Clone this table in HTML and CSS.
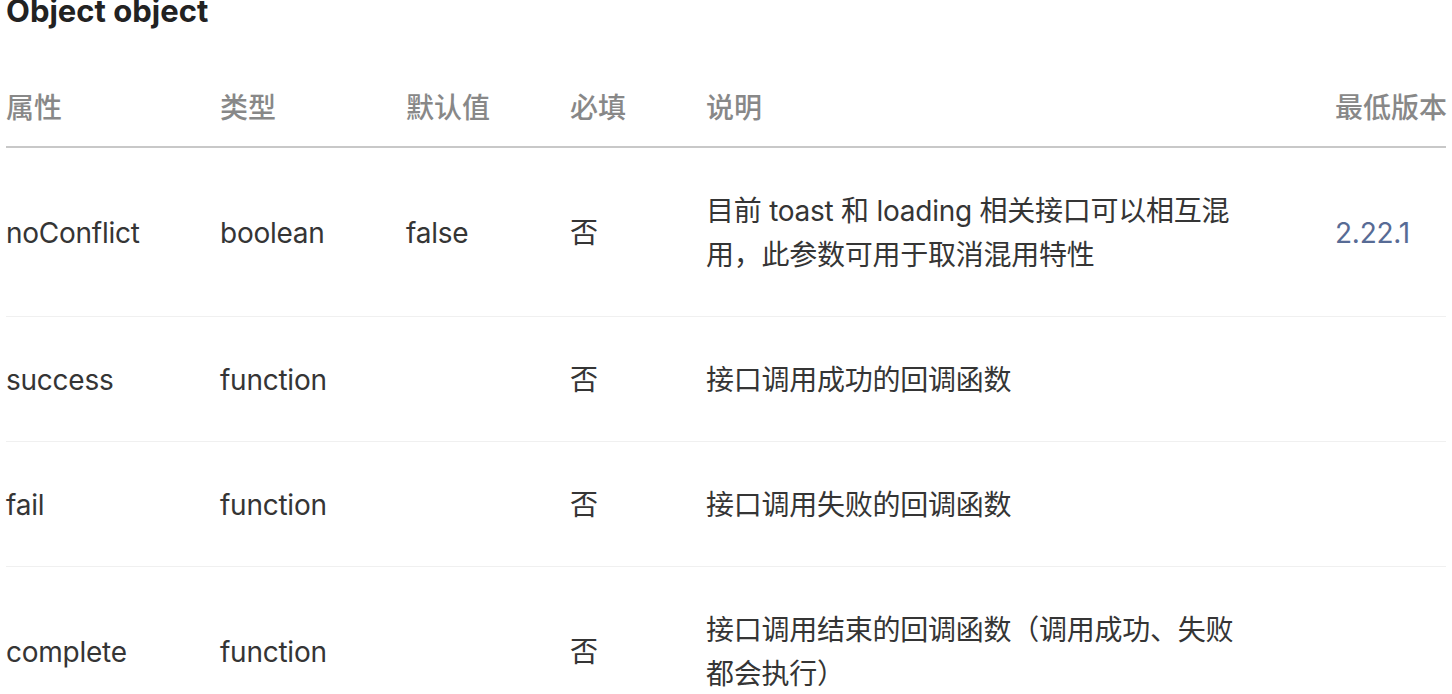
FILE: index.html
```html
<!DOCTYPE html>
<html lang="zh-CN">
<head>
<meta charset="utf-8">
<title>Object object</title>
<link rel="stylesheet" href="styles.css">
</head>
<body>
<div class="doc">
  <h3 class="title">Object object</h3>
  <table class="params">
    <colgroup>
      <col class="c-name"><col class="c-type"><col class="c-default"><col class="c-required"><col class="c-desc"><col class="c-version">
    </colgroup>
    <thead>
      <tr><th>属性</th><th>类型</th><th>默认值</th><th>必填</th><th>说明</th><th>最低版本</th></tr>
    </thead>
    <tbody>
      <tr>
        <td>noConflict</td><td>boolean</td><td>false</td><td>否</td>
        <td class="desc">目前 toast 和 loading 相关接口可以相互混用，此参数可用于取消混用特性</td>
        <td><a class="ver" href="#">2.22.1</a></td>
      </tr>
      <tr>
        <td>success</td><td>function</td><td></td><td>否</td>
        <td class="desc">接口调用成功的回调函数</td><td></td>
      </tr>
      <tr>
        <td>fail</td><td>function</td><td></td><td>否</td>
        <td class="desc">接口调用失败的回调函数</td><td></td>
      </tr>
      <tr>
        <td>complete</td><td>function</td><td></td><td>否</td>
        <td class="desc">接口调用结束的回调函数（调用成功、失败都会执行）</td><td></td>
      </tr>
    </tbody>
  </table>
</div>
</body>
</html>
```

FILE: styles.css
```css
html, body {
  margin: 0;
  padding: 0;
  background: #ffffff;
  overflow: hidden;
}
body {
  font-family: Inter, "Noto Sans CJK SC", sans-serif;
  color: #353535;
}
.doc {
  padding-left: 6px;
}
.title {
  margin: -9px 0 0;
  font-size: 31px;
  line-height: 40px;
  font-weight: 650;
  color: #222222;
}
.params {
  margin-top: 36px;
  width: 1440px;
  border-collapse: collapse;
  table-layout: fixed;
  font-size: 28px;
  line-height: 44px;
}
.c-name { width: 214px; }
.c-type { width: 186px; }
.c-default { width: 164px; }
.c-required { width: 136px; }
.c-desc { width: 629px; }
.c-version { width: 111px; }
.params th {
  text-align: left;
  font-weight: 500;
  color: #888888;
  padding: 19px 0 16px;
  border-bottom: 2px solid #c8c8c8;
  white-space: nowrap;
}
.params td {
  padding: 41px 0 39px;
  vertical-align: middle;
  border-bottom: 1px solid #f0f0f0;
  letter-spacing: -0.25px;
}
.params td.desc {
  padding-right: 89px;
}
.ver {
  color: #576b95;
  text-decoration: none;
}
```
